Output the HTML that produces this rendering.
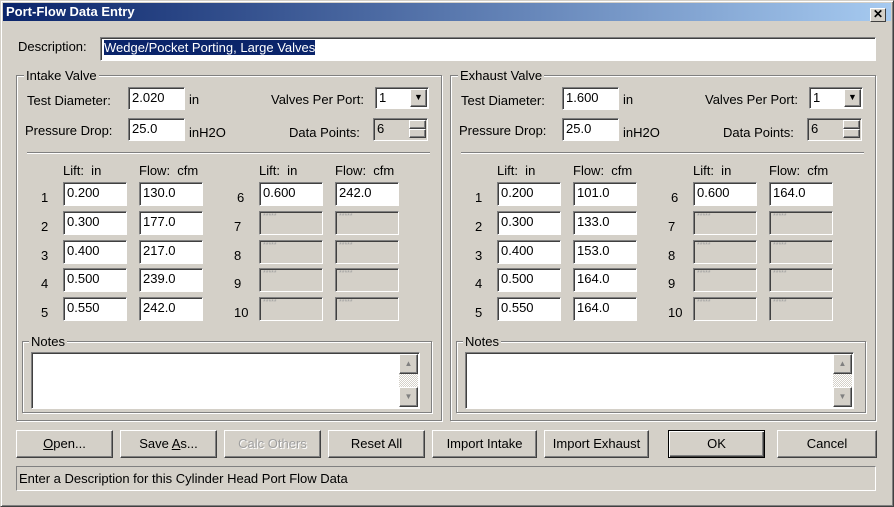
<!DOCTYPE html>
<html><head><style>
*{box-sizing:border-box}
body{margin:0;width:894px;height:507px;background:#d4d0c8;font-family:"Liberation Sans",Arial,sans-serif;font-size:13px;color:#000;position:relative;overflow:hidden}
.a{position:absolute;white-space:nowrap}
.win{position:absolute;left:0;top:0;width:894px;height:507px;border:1px solid;border-color:#d4d0c8 #404040 #404040 #d4d0c8;box-shadow:inset 1px 1px #fff,inset -1px -1px #808080}
.title{position:absolute;left:3px;top:3px;width:888px;height:18px;background:linear-gradient(90deg,#0a246a,#a6caf0);color:#fff;font-weight:bold;font-size:13px;padding:1px 0 0 3px}
.x{position:absolute;right:5px;top:5px;width:16px;height:14px;background:#d4d0c8;border:1px solid;border-color:#fff #404040 #404040 #fff;font-size:12px;font-weight:bold;text-align:center;line-height:11px;color:#000}
.in{position:absolute;background:#fff;border:1px solid;border-color:#808080 #fff #fff #808080;box-shadow:inset 1px 1px #404040;padding:2px 3px;font-size:13px;line-height:16px}
.dis{background:#d4d0c8;color:#a0a0a0;font-size:7px;line-height:8px;padding:1px 3px}
.grp{position:absolute;border:1px solid #808080;box-shadow:1px 1px #fff,inset 1px 1px #fff}
.gl{position:absolute;background:#d4d0c8;padding:0 2px;top:-8px;left:7px}
.btn{position:absolute;top:430px;height:28px;background:#d4d0c8;border:1px solid;border-color:#fff #404040 #404040 #fff;box-shadow:inset -1px -1px #808080;text-align:center;line-height:25px}
.sep{position:absolute;height:2px;border-top:1px solid #808080;border-bottom:1px solid #fff}
.db{position:absolute;width:17px;background:#d4d0c8;border:1px solid;border-color:#fff #404040 #404040 #fff;box-shadow:inset -1px -1px #808080}
</style></head><body>
<div class="win"></div>
<div class="title">Port-Flow Data Entry<div class="x">✕</div></div>
<div class="a" style="left:18px;top:39px">Description:</div>
<div class="in" style="left:100px;top:37px;width:776px;height:24px"><span style="background:#0a246a;color:#fff">Wedge/Pocket Porting, Large Valves</span></div>

<!-- INTAKE -->
<div class="grp" style="left:16px;top:75px;width:426px;height:346px"><div class="gl">Intake Valve</div></div>
<div class="grp" style="left:450px;top:75px;width:426px;height:346px"><div class="gl">Exhaust Valve</div></div>

<div id="L"></div>
<script>
function side(o,d){
var h='';
h+='<div class="a" style="left:'+(27+o)+'px;top:93px">Test Diameter:</div>';
h+='<div class="in" style="left:'+(128+o)+'px;top:87px;width:57px;height:23px">'+d.td+'</div>';
h+='<div class="a" style="left:'+(189+o)+'px;top:92px">in</div>';
h+='<div class="a" style="left:'+(271+o)+'px;top:92px">Valves Per Port:</div>';
h+='<div class="in" style="left:'+(375+o)+'px;top:87px;width:54px;height:22px">1<div class="db" style="right:1px;top:1px;height:18px;font-size:9px;text-align:center;line-height:15px">▼</div></div>';
h+='<div class="a" style="left:'+(25+o)+'px;top:123px">Pressure Drop:</div>';
h+='<div class="in" style="left:'+(128+o)+'px;top:118px;width:57px;height:23px">25.0</div>';
h+='<div class="a" style="left:'+(189+o)+'px;top:125px">inH2O</div>';
h+='<div class="a" style="left:'+(289+o)+'px;top:125px">Data Points:</div>';
h+='<div class="in" style="left:'+(373+o)+'px;top:118px;width:55px;height:23px;background:#d4d0c8">6<div class="db" style="right:1px;top:1px;height:9px"></div><div class="db" style="right:1px;top:10px;height:9px"></div></div>';
h+='<div class="sep" style="left:'+(27+o)+'px;top:152px;width:403px"></div>';
[[63,139],[259,335]].forEach(function(c){
h+='<div class="a" style="left:'+(c[0]+o)+'px;top:163px">Lift:&nbsp; in</div>';
h+='<div class="a" style="left:'+(c[1]+o)+'px;top:163px">Flow:&nbsp; cfm</div>';});
var ys=[182,211,240,268,297];
for(var i=0;i<5;i++){
var y=ys[i];
h+='<div class="a" style="left:'+(41+o)+'px;top:'+(y+8)+'px">'+(i+1)+'</div>';
h+='<div class="in" style="left:'+(63+o)+'px;top:'+y+'px;width:64px;height:24px">'+d.l[i]+'</div>';
h+='<div class="in" style="left:'+(139+o)+'px;top:'+y+'px;width:64px;height:24px">'+d.f[i]+'</div>';
h+='<div class="a" style="left:'+((i?234:237)+o)+'px;top:'+(y+8)+'px">'+(i+6)+'</div>';
if(i==0){
h+='<div class="in" style="left:'+(259+o)+'px;top:'+y+'px;width:64px;height:24px">0.600</div>';
h+='<div class="in" style="left:'+(335+o)+'px;top:'+y+'px;width:64px;height:24px">'+d.f6+'</div>';
}else{
h+='<div class="in dis" style="left:'+(259+o)+'px;top:'+y+'px;width:64px;height:24px">*****</div>';
h+='<div class="in dis" style="left:'+(335+o)+'px;top:'+y+'px;width:64px;height:24px">*****</div>';}
}
h+='<div class="grp" style="left:'+(22+o)+'px;top:341px;width:410px;height:72px"><div class="gl" style="left:6px">Notes</div></div>';
h+='<div class="in" style="left:'+(31+o)+'px;top:352px;width:389px;height:57px;padding:0"><div style="position:absolute;right:1px;top:1px;width:19px;height:53px;background:repeating-conic-gradient(#fff 0 25%,#d4d0c8 0 50%) 0 0/2px 2px"></div><div class="db" style="right:1px;top:1px;width:19px;height:20px;font-size:8px;color:#808080;text-align:center;line-height:17px">▲</div><div class="db" style="right:1px;top:34px;width:19px;height:20px;font-size:8px;color:#808080;text-align:center;line-height:17px">▼</div></div>';
return h;}
document.getElementById('L').outerHTML=side(0,{td:'2.020',l:['0.200','0.300','0.400','0.500','0.550'],f:['130.0','177.0','217.0','239.0','242.0'],f6:'242.0'})+side(434,{td:'1.600',l:['0.200','0.300','0.400','0.500','0.550'],f:['101.0','133.0','153.0','164.0','164.0'],f6:'164.0'});
</script>

<div class="btn" style="left:16px;width:97px"><u>O</u>pen...</div>
<div class="btn" style="left:120px;width:97px">Save <u>A</u>s...</div>
<div class="btn" style="left:224px;width:97px;color:#a0a0a0;text-shadow:1px 1px #fff">Calc Others</div>
<div class="btn" style="left:328px;width:97px">Reset All</div>
<div class="btn" style="left:432px;width:105px">Import Intake</div>
<div class="btn" style="left:544px;width:105px">Import Exhaust</div>
<div class="btn" style="left:668px;width:97px;border:1px solid #000;box-shadow:inset 1px 1px #fff,inset -1px -1px #404040,inset -2px -2px #808080">OK</div>
<div class="btn" style="left:777px;width:100px">Cancel</div>
<div class="a" style="left:16px;top:466px;width:860px;height:25px;border:1px solid;border-color:#808080 #fff #fff #808080;padding:4px 2px">Enter a Description for this Cylinder Head Port Flow Data</div>
</body></html>
